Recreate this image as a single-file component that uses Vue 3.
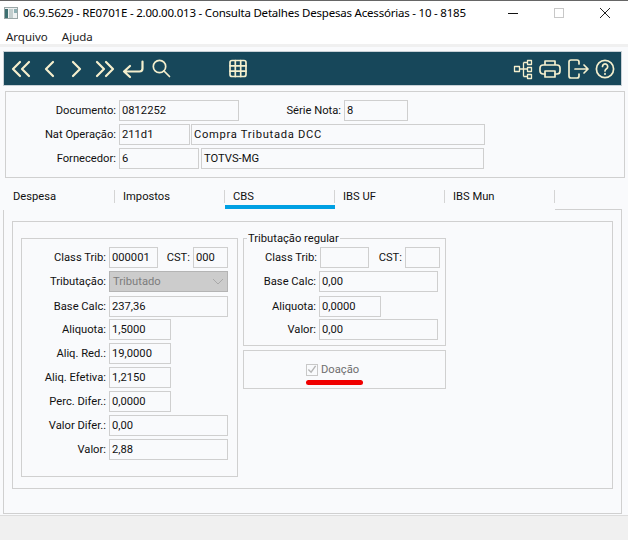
<script setup>
const tabs = [
  { name: 'Despesa' },
  { name: 'Impostos' },
  { name: 'CBS', active: true },
  { name: 'IBS UF' },
  { name: 'IBS Mun' },
]
</script>

<template>
  <div class="window">
    <div class="titlebar">
      <svg class="appicon" width="16" height="16" viewBox="0 0 16 16">
        <rect x="1.5" y="2.5" width="13" height="11" fill="#eef1f1" stroke="#9aa6a6" />
        <rect x="2" y="4" width="3" height="9" fill="#3d6f70" />
        <rect x="6" y="4" width="4" height="9" fill="#c3cece" />
        <rect x="11" y="4" width="3" height="4" fill="#8fb0b3" />
      </svg>
      <span class="title">06.9.5629 - RE0701E - 2.00.00.013 - Consulta Detalhes Despesas Acessórias - 10 - 8185</span>
      <div class="winbtns">
        <svg width="46" height="26" viewBox="0 0 46 26"><path d="M18 13.5h10" stroke="#111" /></svg>
        <svg width="46" height="26" viewBox="0 0 46 26"><rect x="18.5" y="8.5" width="9" height="9" fill="none" stroke="#c8c8c8" /></svg>
        <svg width="46" height="26" viewBox="0 0 46 26"><path d="M18 8l10 10M28 8L18 18" stroke="#222" fill="none" /></svg>
      </div>
    </div>
    <div class="menubar"><span>Arquivo</span><span>Ajuda</span></div>

    <div class="main">
      <div class="toolbar">
        <svg class="ic" viewBox="0 0 24 24"><path d="M11 5l-7 7 7 7M20 5l-7 7 7 7" /></svg>
        <svg class="ic" viewBox="0 0 24 24"><path d="M16 5l-7 7 7 7" /></svg>
        <svg class="ic" viewBox="0 0 24 24"><path d="M8 5l7 7-7 7" /></svg>
        <svg class="ic" viewBox="0 0 24 24"><path d="M4 5l7 7-7 7M13 5l7 7-7 7" /></svg>
        <svg class="ic" viewBox="0 0 24 24"><path d="M21.5 4.5v7a3 3 0 0 1-3 3H3M9 9l-6 5.5 6 5.5" /></svg>
        <svg class="ic thin" viewBox="0 0 24 24"><circle cx="10.5" cy="9.5" r="6.2" /><path d="M15 14l5.5 5.5" /></svg>
        <svg class="ic thin grid" viewBox="0 0 24 24"><rect x="4" y="3.5" width="16" height="16" rx="2" /><path d="M4 8.8h16M4 14.2h16M9.3 3.5v16M14.7 3.5v16" /></svg>
        <div class="tool-right">
          <svg class="ic tiny" viewBox="0 0 24 24"><rect x="3.5" y="9.5" width="5" height="5" /><rect x="16.5" y="3.5" width="4" height="4" /><rect x="16.5" y="10.5" width="4" height="4" /><rect x="16.5" y="17.5" width="4" height="4" /><path d="M8.5 12h8M12.5 5.5v14M12.5 5.5h4M12.5 19.5h4" /></svg>
          <svg class="ic thin" viewBox="0 0 24 24"><path d="M7 8V4h10v4M7 17H5a3 3 0 0 1-3-3v-3a3 3 0 0 1 3-3h14a3 3 0 0 1 3 3v3a3 3 0 0 1-3 3h-2" /><rect x="7" y="14" width="10" height="6" /></svg>
          <svg class="ic thin" viewBox="0 0 24 24"><path d="M13 7V5a2 2 0 0 0-2-2H5a2 2 0 0 0-2 2v14a2 2 0 0 0 2 2h6a2 2 0 0 0 2-2v-2M9 12h13M18 8l4 4-4 4" /></svg>
          <svg class="ic thin" viewBox="0 0 24 24"><circle cx="12" cy="12" r="8.6" /><path d="M9.5 9.5a2.6 2.6 0 1 1 4 2.2c-1 .7-1.5 1.1-1.5 2.3M12 16.6v.6" /></svg>
        </div>
      </div>

      <div class="header">
        <div class="row">
          <label class="lab-h">Documento:</label>
          <div class="field w120">0812252</div>
          <label class="lab-serie">Série Nota:</label>
          <div class="field w64">8</div>
        </div>
        <div class="row">
          <label class="lab-h">Nat Operação:</label>
          <div class="field w71">211d1</div>
          <div class="field w294 gap1 wide">Compra Tributada DCC</div>
        </div>
        <div class="row">
          <label class="lab-h">Fornecedor:</label>
          <div class="field w80">6</div>
          <div class="field w283 gap2">TOTVS-MG</div>
        </div>
      </div>

      <div class="tabs">
        <div v-for="t in tabs" :key="t.name" class="tab" :class="{ active: t.active }">
          <span>{{ t.name }}</span>
        </div>
        <div class="tab-tail"></div>
      </div>

      <div class="pane">
        <div class="inner">
          <div class="group-left">
            <div class="row2">
              <label class="lab-l">Class Trib:</label>
              <div class="field w49">000001</div>
              <label class="lab-cst">CST:</label>
              <div class="field w35">000</div>
            </div>
            <div class="row2">
              <label class="lab-l">Tributação:</label>
              <div class="select w119">
                <span>Tributado</span>
                <svg width="12" height="7" viewBox="0 0 12 7"><path d="M1 1l5 5 5-5" fill="none" stroke="#a9a9a9" /></svg>
              </div>
            </div>
            <div class="row2 nudge">
              <label class="lab-l">Base Calc:</label>
              <div class="field w119">237,36</div>
            </div>
            <div class="row2">
              <label class="lab-l">Aliquota:</label>
              <div class="field w62">1,5000</div>
            </div>
            <div class="row2">
              <label class="lab-l">Aliq. Red.:</label>
              <div class="field w62">19,0000</div>
            </div>
            <div class="row2">
              <label class="lab-l">Aliq. Efetiva:</label>
              <div class="field w62">1,2150</div>
            </div>
            <div class="row2">
              <label class="lab-l">Perc. Difer.:</label>
              <div class="field w62">0,0000</div>
            </div>
            <div class="row2">
              <label class="lab-l">Valor Difer.:</label>
              <div class="field w119">0,00</div>
            </div>
            <div class="row2">
              <label class="lab-l">Valor:</label>
              <div class="field w119">2,88</div>
            </div>
          </div>

          <div class="col-right">
            <fieldset class="regular">
              <legend>Tributação regular</legend>
              <div class="row2">
                <label class="lab-r1">Class Trib:</label>
                <div class="field w49"></div>
                <label class="lab-cst2">CST:</label>
                <div class="field w35"></div>
              </div>
              <div class="row2">
                <label class="lab-r">Base Calc:</label>
                <div class="field w119">0,00</div>
              </div>
              <div class="row2 nudge">
                <label class="lab-r">Aliquota:</label>
                <div class="field w62">0,0000</div>
              </div>
              <div class="row2">
                <label class="lab-r">Valor:</label>
                <div class="field w119">0,00</div>
              </div>
            </fieldset>
            <div class="donation">
              <div class="check-row">
                <span class="checkbox">
                  <svg width="11" height="11" viewBox="0 0 11 11"><path d="M1.5 5.5l3 3 5-7" fill="none" stroke="#b5b5b5" stroke-width="1.5" /></svg>
                </span>
                <span class="check-label">Doação</span>
              </div>
              <div class="redline"></div>
            </div>
          </div>
        </div>
      </div>
    </div>
    <div class="footer"></div>
  </div>
</template>

<style>
html, body { margin: 0; padding: 0; background: #f0f0f0; }
</style>

<style scoped>
.window {
  width: 628px;
  height: 540px;
  overflow: hidden;
  display: flex;
  flex-direction: column;
  font-family: Roboto, "Noto Sans", sans-serif;
  font-size: 11.2px;
  color: #111;
  background: #f0f0f0;
}
.titlebar {
  height: 25px;
  box-sizing: border-box;
  border-top: 1px solid #666;
  background: #fff;
  display: flex;
  align-items: center;
  padding-left: 3px;
  padding-bottom: 1px;
  font-family: "Noto Sans", sans-serif;
  font-size: 11.5px;
}
.appicon { flex: none; }
.title { margin-left: 4px; color: #000; white-space: nowrap; letter-spacing: -0.21px; }
.winbtns { margin-left: auto; display: flex; margin-top: 1px; }
.winbtns svg { display: block; }
.menubar {
  height: 19px;
  box-sizing: border-box;
  padding-top: 3px;
  background: #fff;
  display: flex;
  gap: 14px;
  padding-left: 6px;
  align-items: center;
  color: #222;
  font-family: "Noto Sans", sans-serif;
  font-size: 11.5px;
}
.main {
  height: 469px;
  margin-top: 3px;
  background: #f9fafc;
  border-bottom: 1px solid #dcdcdc;
  box-sizing: border-box;
  padding-top: 4px;
}
.toolbar {
  width: 619px;
  height: 35px;
  margin-left: 3px;
  box-sizing: border-box;
  border: 1px solid #c7d0d6;
  background: #17475a;
  display: flex;
  align-items: center;
  padding-left: 5px;
  gap: 4px;
}
.ic {
  width: 24px;
  height: 24px;
  flex: none;
  fill: none;
  stroke: #f5efcd;
  stroke-width: 2.2;
  stroke-linecap: round;
  stroke-linejoin: round;
}
.ic.thin { stroke-width: 1.7; }
.ic.tiny { stroke-width: 1.3; stroke-linecap: butt; }
.ic.grid { margin-left: 49px; }
.tool-right {
  margin-left: auto;
  display: flex;
  gap: 3.5px;
  padding-right: 4px;
}
.header {
  width: 620px;
  height: 87px;
  margin: 5px 0 0 5px;
  box-sizing: border-box;
  border: 1px solid #d0d0d0;
  padding-top: 8px;
  display: flex;
  flex-direction: column;
  gap: 3px;
}
.row { display: flex; align-items: center; height: 21px; }
.row2 { display: flex; align-items: center; height: 21px; }
.nudge { margin-top: 1px; margin-bottom: -1px; }
label { white-space: nowrap; text-align: right; flex: none; color: #111; }
.lab-h { width: 110px; margin-right: 3px; }
.lab-serie { width: 102px; margin-right: 3px; }
.field {
  box-sizing: border-box;
  height: 21px;
  line-height: 19px;
  border: 1px solid #cfcfcf;
  padding-left: 2px;
  background: #f9fafc;
  color: #111;
  flex: none;
  white-space: nowrap;
}
.wide { letter-spacing: 0.7px; }
.w35 { width: 35px; }
.w49 { width: 49px; }
.w62 { width: 62px; }
.w64 { width: 64px; }
.w71 { width: 71px; }
.w80 { width: 80px; }
.w119 { width: 119px; }
.w120 { width: 120px; }
.w283 { width: 283px; }
.w294 { width: 294px; }
.gap1 { margin-left: 1px; }
.gap2 { margin-left: 2px; }
.tabs {
  display: flex;
  align-items: flex-start;
  height: 20px;
  margin-top: 12px;
  margin-left: 5px;
  width: 617px;
}
.tab {
  width: 110px;
  height: 19px;
  box-sizing: border-box;
  flex: none;
}
.tab span {
  display: block;
  height: 13px;
  line-height: 13px;
  padding-left: 8px;
  border-right: 1px solid #d4d4d4;
  color: #111;
}
.tab.active { border-bottom: 4px solid #00a0e3; }
.tab-tail { flex: 1; height: 20px; box-sizing: border-box; border-bottom: 1px solid #d0d0d0; }
.pane {
  width: 619px;
  height: 304px;
  margin-left: 3px;
  box-sizing: border-box;
  border: 1px solid #d0d0d0;
  border-top: none;
  padding: 11px 8px 0;
}
.inner {
  width: 601px;
  height: 268px;
  box-sizing: border-box;
  border: 1px solid #d0d0d0;
  display: flex;
  align-items: flex-start;
  padding-left: 8px;
}
.group-left {
  width: 217px;
  height: 239px;
  margin-top: 16px;
  box-sizing: border-box;
  border: 1px solid #d0d0d0;
  padding-top: 8px;
  display: flex;
  flex-direction: column;
  gap: 3px;
}
.lab-l { width: 84px; margin-right: 3px; }
.lab-cst { width: 32px; margin-right: 3px; }
.lab-cst2 { width: 33px; margin-right: 3px; }
.select {
  box-sizing: border-box;
  height: 21px;
  background: #cccccc;
  border: 1px solid #b4b4b4;
  color: #7d7d7d;
  display: flex;
  align-items: center;
  justify-content: space-between;
  padding: 0 3px;
}
.col-right {
  margin-left: 5px;
  margin-top: 10px;
  width: 203px;
  display: flex;
  flex-direction: column;
}
.regular {
  margin: 0;
  padding: 2px 0 5px 0;
  width: 203px;
  height: 114px;
  box-sizing: border-box;
  border: 1px solid #d0d0d0;
  display: flex;
  flex-direction: column;
  gap: 3px;
}
legend { padding: 0 1px; margin-left: 3px; line-height: 13px; color: #111; }
.lab-r { width: 72px; margin-right: 3px; }
.lab-r1 { width: 73px; margin-right: 3px; }
.donation {
  width: 203px;
  height: 39px;
  margin-top: 4px;
  box-sizing: border-box;
  border: 1px solid #d0d0d0;
  padding: 12px 0 0 62px;
}
.check-row { display: flex; align-items: center; height: 13px; gap: 3px; }
.checkbox {
  width: 12px;
  height: 12px;
  box-sizing: border-box;
  border: 1px solid #c8c8c8;
  display: flex;
  align-items: center;
  justify-content: center;
}
.check-label { color: #6f6f6f; }
.redline {
  width: 57px;
  height: 5px;
  margin-top: 4px;
  border-radius: 3px;
  background: #f00000;
}
.footer { flex: 1; background: #f0f0f0; }
</style>
